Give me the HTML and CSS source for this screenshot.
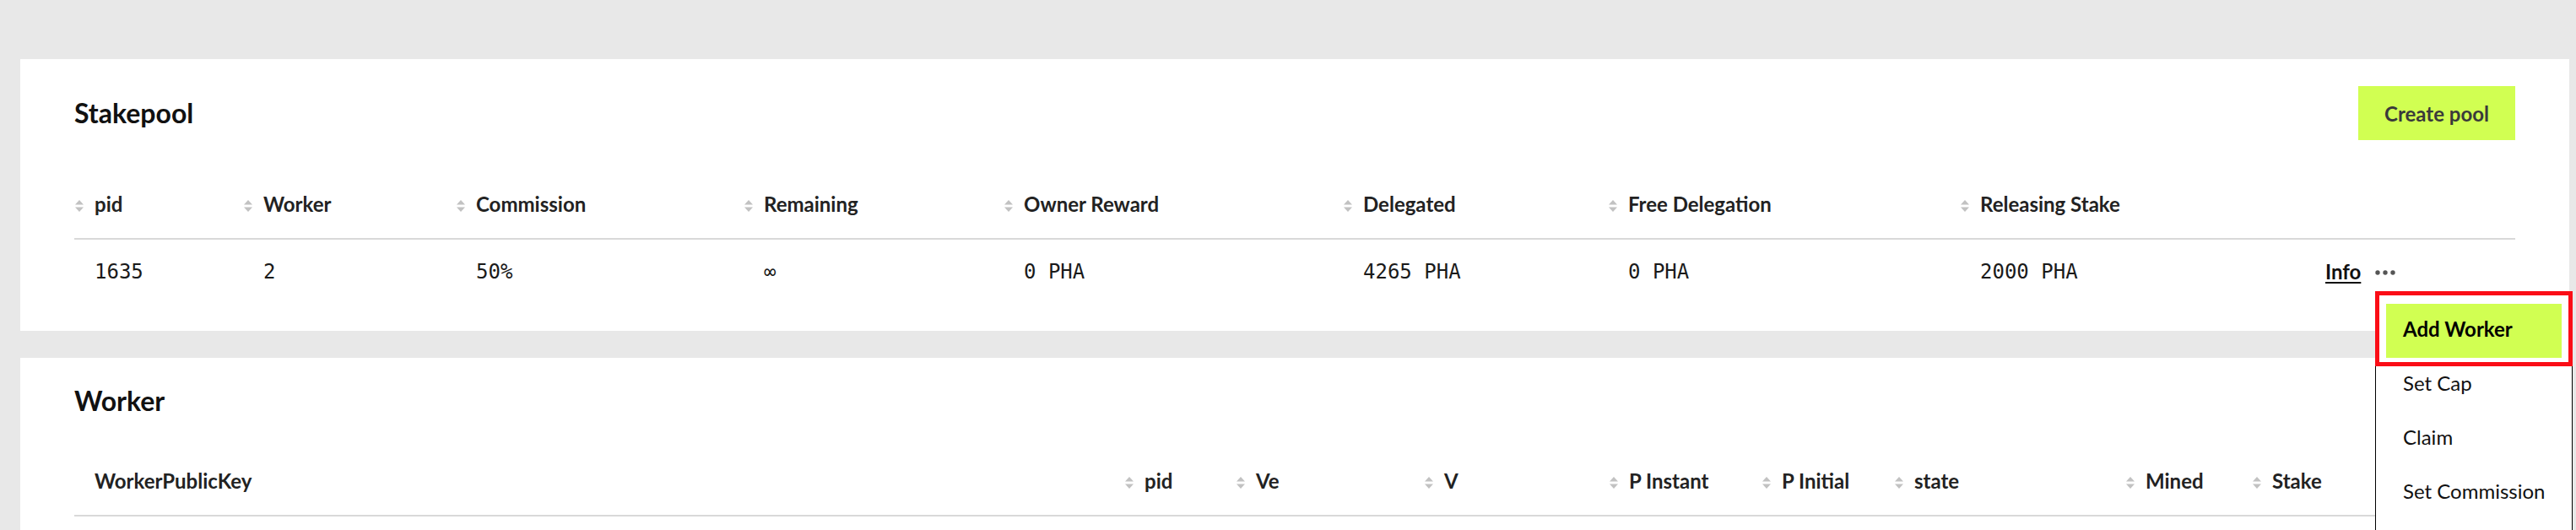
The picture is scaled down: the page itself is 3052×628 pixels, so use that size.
FILE: index.html
```html
<!DOCTYPE html>
<html lang="en">
<head>
<meta charset="utf-8">
<title>Stakepool</title>
<link rel="stylesheet" href="styles.css">
</head>
<body>
<div class="page">
  <section class="card">
    <div class="card-header tall">
      <h2 class="card-title">Stakepool</h2>
      <button class="btn-primary">Create pool</button>
    </div>
    <table class="grid pool">
      <colgroup>
        <col class="c-pid"><col class="c-worker"><col class="c-comm"><col class="c-rem"><col class="c-owner"><col class="c-del"><col class="c-free"><col class="c-rel"><col class="c-act">
      </colgroup>
      <thead>
        <tr>
          <th><div class="th-in"><svg class="sort" viewBox="0 0 10 14"><path d="M5 0 L10 5.5 L0 5.5 Z"/><path d="M0 8.5 L10 8.5 L5 14 Z"/></svg>pid</div></th>
          <th><div class="th-in"><svg class="sort" viewBox="0 0 10 14"><path d="M5 0 L10 5.5 L0 5.5 Z"/><path d="M0 8.5 L10 8.5 L5 14 Z"/></svg>Worker</div></th>
          <th><div class="th-in"><svg class="sort" viewBox="0 0 10 14"><path d="M5 0 L10 5.5 L0 5.5 Z"/><path d="M0 8.5 L10 8.5 L5 14 Z"/></svg>Commission</div></th>
          <th><div class="th-in"><svg class="sort" viewBox="0 0 10 14"><path d="M5 0 L10 5.5 L0 5.5 Z"/><path d="M0 8.5 L10 8.5 L5 14 Z"/></svg>Remaining</div></th>
          <th><div class="th-in"><svg class="sort" viewBox="0 0 10 14"><path d="M5 0 L10 5.5 L0 5.5 Z"/><path d="M0 8.5 L10 8.5 L5 14 Z"/></svg>Owner Reward</div></th>
          <th><div class="th-in"><svg class="sort" viewBox="0 0 10 14"><path d="M5 0 L10 5.5 L0 5.5 Z"/><path d="M0 8.5 L10 8.5 L5 14 Z"/></svg>Delegated</div></th>
          <th><div class="th-in"><svg class="sort" viewBox="0 0 10 14"><path d="M5 0 L10 5.5 L0 5.5 Z"/><path d="M0 8.5 L10 8.5 L5 14 Z"/></svg>Free Delegation</div></th>
          <th><div class="th-in"><svg class="sort" viewBox="0 0 10 14"><path d="M5 0 L10 5.5 L0 5.5 Z"/><path d="M0 8.5 L10 8.5 L5 14 Z"/></svg>Releasing Stake</div></th>
          <th><div class="th-in plain"></div></th>
        </tr>
      </thead>
      <tbody>
        <tr>
          <td class="mono">1635</td>
          <td class="mono">2</td>
          <td class="mono">50%</td>
          <td class="mono">∞</td>
          <td class="mono">0 PHA</td>
          <td class="mono">4265 PHA</td>
          <td class="mono">0 PHA</td>
          <td class="mono">2000 PHA</td>
          <td class="actions"><a class="info-link">Info</a><svg class="more" viewBox="0 0 24 6"><circle cx="3" cy="3" r="2.7"/><circle cx="12" cy="3" r="2.7"/><circle cx="21" cy="3" r="2.7"/></svg></td>
        </tr>
      </tbody>
    </table>
  </section>

  <section class="card">
    <div class="card-header">
      <h2 class="card-title">Worker</h2>
    </div>
    <table class="grid workers">
      <colgroup>
        <col class="w-key"><col class="w-pid"><col class="w-ve"><col class="w-v"><col class="w-pins"><col class="w-pini"><col class="w-state"><col class="w-mined"><col class="w-stake">
      </colgroup>
      <thead>
        <tr>
          <th><div class="th-in plain">WorkerPublicKey</div></th>
          <th><div class="th-in"><svg class="sort" viewBox="0 0 10 14"><path d="M5 0 L10 5.5 L0 5.5 Z"/><path d="M0 8.5 L10 8.5 L5 14 Z"/></svg>pid</div></th>
          <th><div class="th-in"><svg class="sort" viewBox="0 0 10 14"><path d="M5 0 L10 5.5 L0 5.5 Z"/><path d="M0 8.5 L10 8.5 L5 14 Z"/></svg>Ve</div></th>
          <th><div class="th-in"><svg class="sort" viewBox="0 0 10 14"><path d="M5 0 L10 5.5 L0 5.5 Z"/><path d="M0 8.5 L10 8.5 L5 14 Z"/></svg>V</div></th>
          <th><div class="th-in"><svg class="sort" viewBox="0 0 10 14"><path d="M5 0 L10 5.5 L0 5.5 Z"/><path d="M0 8.5 L10 8.5 L5 14 Z"/></svg>P Instant</div></th>
          <th><div class="th-in"><svg class="sort" viewBox="0 0 10 14"><path d="M5 0 L10 5.5 L0 5.5 Z"/><path d="M0 8.5 L10 8.5 L5 14 Z"/></svg>P Initial</div></th>
          <th><div class="th-in"><svg class="sort" viewBox="0 0 10 14"><path d="M5 0 L10 5.5 L0 5.5 Z"/><path d="M0 8.5 L10 8.5 L5 14 Z"/></svg>state</div></th>
          <th><div class="th-in"><svg class="sort" viewBox="0 0 10 14"><path d="M5 0 L10 5.5 L0 5.5 Z"/><path d="M0 8.5 L10 8.5 L5 14 Z"/></svg>Mined</div></th>
          <th><div class="th-in"><svg class="sort" viewBox="0 0 10 14"><path d="M5 0 L10 5.5 L0 5.5 Z"/><path d="M0 8.5 L10 8.5 L5 14 Z"/></svg>Stake</div></th>
        </tr>
      </thead>
    </table>
  </section>

  <ul class="menu">
    <li class="menu-item active">Add Worker</li>
    <li class="menu-item">Set Cap</li>
    <li class="menu-item">Claim</li>
    <li class="menu-item">Set Commission</li>
  </ul>
  <div class="highlight"></div>
</div>
</body>
</html>
```

FILE: styles.css
```css
* { box-sizing: border-box; }

html, body {
  margin: 0;
  padding: 0;
  background: #e8e8e8;
  height: 100%;
  overflow: hidden;
}

body {
  font-family: Lato, "Noto Sans", sans-serif;
  color: #222;
}

.page {
  position: relative;
  padding: 70px 8px 0 24px;
  display: flex;
  flex-direction: column;
  gap: 32px;
}

.card {
  background: #fff;
  padding: 32px 64px;
}

.card-header {
  display: flex;
  align-items: center;
  justify-content: space-between;
  margin-bottom: 40px;
}
.card-header.tall { height: 64px; }

.card-title {
  margin: 0;
  font-size: 32px;
  line-height: 38px;
  font-weight: 700;
  color: #111;
}

.btn-primary {
  height: 64px;
  padding: 0 31px;
  border: 0;
  background: #d1ff52;
  color: #3a3a3a;
  font-family: Lato, sans-serif;
  font-size: 24px;
  font-weight: 700;
}

.grid {
  width: 100%;
  table-layout: fixed;
  border-collapse: separate;
  border-spacing: 0;
}

.grid th {
  padding: 18px 0 22px;
  border-bottom: 2px solid #d9d9d9;
  text-align: left;
  font-weight: 700;
  font-size: 24px;
  line-height: 36px;
  color: #222;
}

.th-in {
  display: flex;
  align-items: center;
  white-space: nowrap;
}
.th-in.plain { padding-left: 24px; }

.sort {
  width: 10px;
  height: 14px;
  margin: 4px 13px 0 1px;
  fill: #c2c2c2;
  flex: none;
}

.grid td {
  padding: 20px 0 20px 24px;
  font-size: 24px;
  line-height: 36px;
  white-space: nowrap;
}

.mono {
  font-family: "DejaVu Sans Mono", "Liberation Mono", monospace;
  color: #1a1a1a;
}

.actions {
  font-family: Lato, sans-serif;
}

.info-link {
  font-weight: 700;
  color: #111;
  text-decoration: underline;
  text-decoration-thickness: 2px;
  text-underline-offset: 3px;
}

.more {
  width: 24px;
  height: 6px;
  margin-left: 17px;
  fill: #555;
  vertical-align: 5px;
}

/* Stakepool columns */
.c-pid { width: 200px; }
.c-worker { width: 252px; }
.c-comm { width: 341px; }
.c-rem { width: 308px; }
.c-owner { width: 402px; }
.c-del { width: 314px; }
.c-free { width: 417px; }
.c-rel { width: 409px; }
.c-act { width: 249px; }

/* Worker columns */
.w-key { width: 1244px; }
.w-pid { width: 132px; }
.w-ve { width: 223px; }
.w-v { width: 219px; }
.w-pins { width: 181px; }
.w-pini { width: 157px; }
.w-state { width: 274px; }
.w-mined { width: 150px; }
.w-stake { width: 312px; }

/* Dropdown menu */
.menu {
  position: absolute;
  left: 2814px;
  top: 347px;
  width: 234px;
  margin: 0;
  padding: 12px 12px 20px;
  list-style: none;
  background: #fff;
  border: 1.5px solid #000;
}

.menu-item {
  padding: 14px 20px 18px;
  font-size: 24px;
  line-height: 32px;
  color: #111;
  white-space: nowrap;
}

.menu-item.active {
  background: #d1ff52;
  font-weight: 700;
  color: #000;
}

.highlight {
  position: absolute;
  left: 2814px;
  top: 345px;
  width: 234px;
  height: 89px;
  border: 5px solid #fb0d16;
}
```
